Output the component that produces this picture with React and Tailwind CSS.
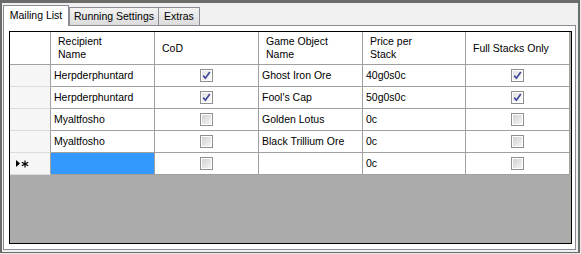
import React from 'react';

const rows = [
  { name: 'Herpderphuntard', cod: true, item: 'Ghost Iron Ore', price: '40g0s0c', full: true },
  { name: 'Herpderphuntard', cod: true, item: "Fool's Cap", price: '50g0s0c', full: true },
  { name: 'Myaltfosho', cod: false, item: 'Golden Lotus', price: '0c', full: false },
  { name: 'Myaltfosho', cod: false, item: 'Black Trillium Ore', price: '0c', full: false },
];

const Check = ({ checked }) => (
  <div className="w-[13px] h-[13px] border border-[#8e8f8f] bg-white p-px">
    <div
      className={`w-full h-full flex items-center justify-center bg-gradient-to-br ${
        checked ? 'from-[#e4e4e4] to-[#fbfbfb]' : 'from-[#d2d2d2] to-[#f4f4f4]'
      }`}
    >
      {checked && (
        <svg width="9" height="9" viewBox="0 0 9 9">
          <path d="M1.2 4.6 L3.4 7.2 L7.8 1" fill="none" stroke="#43489a" strokeWidth="1.7" />
        </svg>
      )}
    </div>
  </div>
);

const cell = 'border-r border-b border-[#a0a0a0] bg-white flex items-center';

const App = () => {
  return (
    <div className="w-[581px] h-[254px] bg-[#e9e9e9] pr-px pb-px font-['Liberation_Sans',Arial,sans-serif] text-[10.5px] text-black">
      <div className="h-full flex flex-col bg-[#f0f0f0] border-t-[3px] border-l-2 border-r-2 border-b border-[#6b6b6b] pl-px pr-[2px] pt-[2px] pb-[2px]">
        {/* Tabs */}
        <div className="flex items-end h-[20px] relative z-10">
          <div className="w-[66px] h-[21px] -mb-px bg-white border-t border-l border-r border-[#898c95] flex items-center justify-center pb-px">
            Mailing List
          </div>
          <div className="w-[90px] h-[18px] bg-gradient-to-b from-[#f3f3f3] to-[#dcdcdc] border-t border-l border-r border-[#898c95] flex items-center justify-center">
            Running Settings
          </div>
          <div className="w-[41px] h-[18px] bg-gradient-to-b from-[#f3f3f3] to-[#dcdcdc] border-t border-r border-[#898c95] flex items-center justify-center">
            Extras
          </div>
        </div>

        {/* Panel */}
        <div className="flex-1 flex bg-white border border-[#898c95] pt-[5px] pl-[5px] pr-[3px] pb-[5px]">
          <div className="flex-1 flex flex-col border border-black bg-[#ababab]">
            <div className="grid grid-cols-[41px_104px_104px_104px_103px_104px]">
              {/* Header */}
              <div className="h-[33px] border-r border-b border-[#a0a0a0] bg-white" />
              <div className={`${cell} h-[33px] pl-[7px] leading-[13px]`}>Recipient<br />Name</div>
              <div className={`${cell} h-[33px] pl-[7px] leading-[13px]`}>CoD</div>
              <div className={`${cell} h-[33px] pl-[7px] leading-[13px]`}>Game Object<br />Name</div>
              <div className={`${cell} h-[33px] pl-[7px] leading-[13px]`}>Price per<br />Stack</div>
              <div className={`${cell} h-[33px] pl-[7px] leading-[13px]`}>Full Stacks Only</div>

              {rows.map((r, i) => (
                <React.Fragment key={i}>
                  <div className="h-[22px] border-r border-b border-r-[#a0a0a0] border-b-[#dcdcdc] bg-[#f6f6f6]" />
                  <div className={`${cell} h-[22px] pl-[3px]`}>{r.name}</div>
                  <div className={`${cell} h-[22px] justify-center`}><Check checked={r.cod} /></div>
                  <div className={`${cell} h-[22px] pl-[3px]`}>{r.item}</div>
                  <div className={`${cell} h-[22px] pl-[3px]`}>{r.price}</div>
                  <div className={`${cell} h-[22px] justify-center`}><Check checked={r.full} /></div>
                </React.Fragment>
              ))}

              {/* New row */}
              <div className="h-[22px] border-r border-b border-r-[#a0a0a0] border-b-[#dcdcdc] bg-[#f6f6f6] flex items-center pl-[6px] gap-[1px]">
                <svg width="4" height="7" viewBox="0 0 4 7">
                  <path d="M0 0 L4 3.5 L0 7 Z" fill="#000" />
                </svg>
                <svg width="8" height="8" viewBox="0 0 8 8">
                  <path d="M4 0.5 V7.5 M0.8 2.2 L7.2 5.8 M0.8 5.8 L7.2 2.2" stroke="#000" strokeWidth="1.2" />
                </svg>
              </div>
              <div className="h-[22px] border-r border-b border-[#a0a0a0] bg-[#3399ff]" />
              <div className={`${cell} h-[22px] justify-center`}><Check checked={false} /></div>
              <div className={`${cell} h-[22px]`} />
              <div className={`${cell} h-[22px] pl-[3px]`}>0c</div>
              <div className={`${cell} h-[22px] justify-center`}><Check checked={false} /></div>
            </div>
            <div className="flex-1" />
          </div>
        </div>
      </div>
    </div>
  );
};

export default App;
